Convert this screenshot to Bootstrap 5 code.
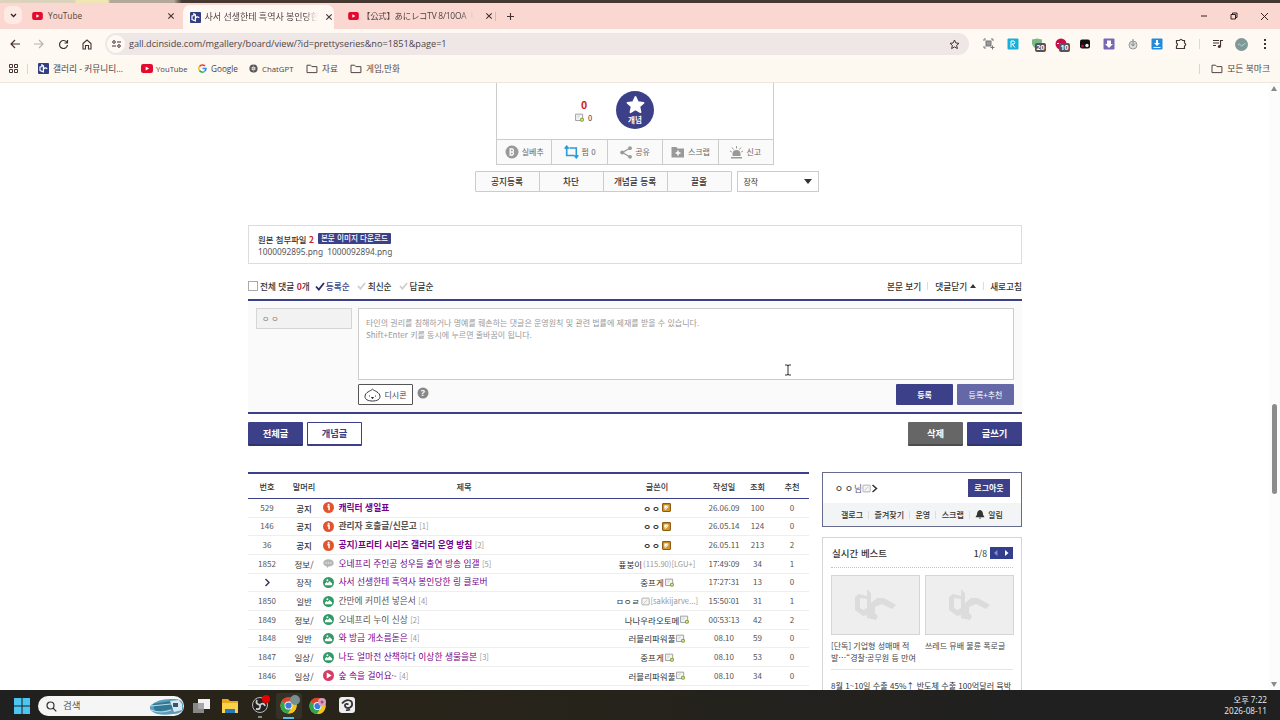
<!DOCTYPE html>
<html lang="ko">
<head>
<meta charset="utf-8">
<title>DCinside gallery</title>
<link rel="stylesheet" href="https://cdn.jsdelivr.net/npm/bootstrap@5.3.0/dist/css/bootstrap.min.css">
<style>
:root{--navy:#3b4089;--ln:#ddd}
body{width:1280px;height:720px;overflow:hidden;font-family:"Noto Sans CJK KR",sans-serif;font-size:8.67px;line-height:12px;color:#333;background:#fff;display:flex;flex-direction:column}
svg{display:block;flex:none}
.ui{font-family:"Open Sans","Noto Sans CJK KR",sans-serif;color:#4d4444}
.desk{height:3px;background:linear-gradient(90deg,#ddd3bc 0 75px,#efe6b4 76px 108px,#b3a89a 110px 174px,#453830 182px)}
.tabs{height:26px;background:#fad7d0;font-size:9px}
.tabs>*{flex:none}
.drop{width:18px;height:18px;border-radius:6px;background:#fdeae4;margin:3px 11px 0 4px}
.acttab{width:151px;height:24px;margin-top:2px;background:#fff8f3;border-radius:7px 7px 0 0}
.clip{overflow:hidden;white-space:nowrap}
.fade-r{-webkit-mask-image:linear-gradient(90deg,#000 88%,transparent)}
.tools{height:30px;background:#fff9f3}
.url{width:864px;height:22px;border-radius:11px;background:#efe7e6;font-size:9.17px}
.url .site{width:18px;height:18px;border-radius:50%;background:#fff9f3;margin-left:2px}
.marks{height:24px;background:#fdf8f0;border-bottom:1px solid #efe6df;font-size:8.2px}
.marks>*{flex:none}
.ext{position:relative;width:12px;height:12px;margin-right:12px}
.ext b{position:absolute;left:4px;top:5px;width:11px;height:9px;border-radius:2px;background:#555;color:#fff;font-size:7px;line-height:9px;text-align:center;font-family:"Open Sans"}
.view{height:607px;overflow:hidden;position:relative}
.page{width:774px;margin-left:248px}
.vote{width:278px;margin-left:248px;border:1px solid #ccc;border-top:0;height:82px}
.vote .top{height:56px}
.vote .bot{height:25px;border-top:1px solid #ccc;background:#fafafa;color:#666;font-size:8px}
.vote .bot>div{flex:1;border-right:1px solid #ccc;gap:3px}
.vote .bot>div:last-child{border:0}
.gae{width:38px;height:38px;border-radius:50%;background:var(--navy);color:#fff;font-size:7.5px;line-height:9px;font-weight:700}
.adm{height:21px;margin:6px 0 0 226.5px}
.adm .grp{width:257px;border:1px solid #ccc;border-radius:1px;background:#fafafa;font-weight:500}
.adm .grp div{flex:1;border-right:1px solid #ccc;text-align:center;line-height:19px}
.adm .grp div:last-child{border:0}
.adm .sel{width:82px;margin-left:5px;border:1px solid #ccc;line-height:19px;padding:0 6px;font-size:8px}
.files{height:39px;margin-top:33px;border:1px solid var(--ln);padding:7px 9px;font-weight:500;font-size:8px;line-height:12px}
.files i{font-style:normal;background:var(--navy);color:#fff;border-radius:1px;padding:0 3px;line-height:10.5px;height:11px;font-size:7.6px}
.files .hd{font-size:8.4px}
.files .nm{font-family:"Noto Sans";font-weight:400;font-size:8.3px;color:#555;line-height:14px}
.chead{height:35px;padding-top:9px;font-weight:500;line-height:26px}
.red{color:#c22;font-weight:700}
.cbox{height:115px;border:solid var(--navy);border-width:2px 0;background:#fafafa}
.nick{width:96px;height:21px;margin:7px 6px 0 8px;border:1px solid #d5d5d5;background:#f2f2f2;color:#777;font-size:8px;line-height:19px;padding-left:5px}
.ta{width:656px;height:72px;margin-top:7px;border:1px solid #ccc;background:#fff;color:#999;font-size:8px;line-height:12px;padding:8px 7px}
.cb{height:21px;border-radius:1px;font-size:8px;line-height:21px;text-align:center;color:#fff;background:var(--navy);font-weight:700;width:57px}
.big{width:55px;height:24px;border-radius:1px;background:var(--navy);color:#fff;font-weight:700;line-height:22px;text-align:center;font-size:9.33px;border-bottom:2px solid #2b3573}
.big.lite{background:#fff;color:var(--navy);border:1px solid var(--navy);border-bottom-width:2px;line-height:21px}
.big.grey{background:#666;border-color:#4c4c4c}
.lst{width:561px;table-layout:fixed;border-top:2px solid var(--navy);border-collapse:separate;border-spacing:0;text-align:center}
.lst th{height:25px;border-bottom:1px solid var(--navy);font-weight:500;padding:0;font-size:8.2px;text-align:center}
.lst td{height:18.67px;padding:0;border-bottom:1px solid #eee;font-size:8px;line-height:12px;white-space:nowrap;color:#555}
.lst td.t{text-align:left;font-size:8.75px}
.lst td.t div{padding-left:1px;gap:4.5px}
.lst td.c,.lst td.w{font-size:8.5px;color:#333}
.nt td.c,.nt td.t,.nt td.w{font-weight:700}
.nt td.c{font-weight:500}
.lst .v{color:#770088}
.lst em{font-style:normal;font-weight:400;color:#999;font-size:7.6px}
.lst .w div{gap:1px}
.jm{letter-spacing:2px}
.side{width:200px;margin-left:13px}
.me{height:55px;border:1px solid #666a8c}
.me .a{height:30px;padding:0 12px}
.me .b{height:23px;background:#f3f4f5;font-size:8px;font-weight:500}
.lo{width:42px;height:18px;background:var(--navy);color:#fff;font-weight:700;font-size:8px;line-height:18px;text-align:center}
.best{height:160px;margin-top:10px;border:1px solid #d5d5d5;padding:0 8px}
.best .h{height:30px;border-bottom:1.5px dotted #c2c2c2}
.best .th{width:89px;height:60px;background:#eee;border:1px solid #d5d5d5}
.best .tx{width:89px;font-size:8px;line-height:12px;margin-top:5px;white-space:nowrap;color:#444}
.bar{height:30px;background:linear-gradient(90deg,#202020 0 30px,#28241a 120px 440px,#24221d 760px,#202020 1000px);color:#eee}
.srch{width:146px;height:20px;border-radius:10px;background:#f5f5f5;color:#555;font-size:9.5px;margin-left:8px}
.sbar{position:absolute;right:0;top:0;width:11px;height:607px;background:#fcfcfc}
.sbar i{position:absolute;left:3px;top:321px;width:5px;height:90px;border-radius:3px;background:#8c8c8c}
.up,.dn{width:0;height:0;border:3.5px solid transparent;border-top:0;border-bottom:5px solid #8a8a8a}
.dn{border-bottom:0;border-top:5px solid #8a8a8a}
.cur{position:absolute;left:784px;top:281px}
.sep{width:1px;height:8px;background:#ddd}
</style>
</head>
<body>
<svg width="0" height="0" style="position:absolute">
<symbol id="yt" viewBox="0 0 12 9"><rect width="12" height="9" rx="2.2" fill="#e3092f"/><path d="M4.7 2.5v4l3.4-2z" fill="#fff"/></symbol>
<symbol id="dc" viewBox="0 0 11 11"><rect width="11" height="11" rx="1" fill="#333d80"/><path d="M3.900 1.800L5.400 2.800V8.800L2 7.500V4L3.900 3.500zM5.400 6.200L7 4.800 9.300 5.600" fill="none" stroke="#fff" stroke-width="1.200"/></symbol>
<symbol id="x" viewBox="0 0 8 8"><path d="M1.3 1.3l5.4 5.4M6.7 1.3L1.3 6.7" stroke="#433" stroke-width="1.1"/></symbol>
<symbol id="fd" viewBox="0 0 12 10"><path d="M1 1.2h3.6l1.3 1.4h5v6H1z" fill="none" stroke="#544" stroke-width="1" stroke-linejoin="round"/></symbol>
<symbol id="inf" viewBox="0 0 10 10"><circle cx="5" cy="5" r="5" fill="#e0552f"/><path d="M4 4.200h1.500v3.300" stroke="#fff" stroke-width="1.400" fill="none"/><circle cx="5.100" cy="2.500" r=".9" fill="#fff"/></symbol>
<symbol id="pic" viewBox="0 0 10 10"><circle cx="5" cy="5" r="5" fill="#339966"/><path d="M1.8 7.4V5.8l1.5-1.3 1.2.9 1.4-1.7 2.4 2.2v1.5z" fill="#fff"/><circle cx="4" cy="2.9" r=".9" fill="#fff"/></symbol>
<symbol id="txt" viewBox="0 0 10 10"><path d="M5 1.2c2.8 0 4.8 1.3 4.8 3.3S7.8 7.7 5 7.7L3.8 9 3 7.4C1.3 7 .2 5.9.2 4.5.2 2.500 2.200 1.200 5 1.200z" fill="#b5b5b5"/><path d="M2.300 4.500h1.200M4.400 4.500h1.200M6.500 4.500h1.200" stroke="#fff" stroke-width="1"/></symbol>
<symbol id="ply" viewBox="0 0 10 10"><circle cx="5" cy="5" r="5" fill="#d43d66"/><path d="M3.400 2.200v5.600L7.900 5z" fill="#fff"/></symbol>
<symbol id="gold" viewBox="0 0 8 8"><rect x=".5" y=".5" width="7" height="7" rx=".8" fill="#d9992b" stroke="#8a5b12"/><path d="M2 2.300h3.800L2.300 5.800z" fill="#fff"/><path d="M3 6l2.800-2.800" stroke="#fff" stroke-width=".8"/></symbol>
<symbol id="gr" viewBox="0 0 8 8"><path d="M.5 1h6.300v5.700H.5z" fill="#f5f5f5" stroke="#999" stroke-width=".8"/><path d="M2 2.200h3L2.400 5z" fill="#ddd"/><circle cx="6.200" cy="6" r="1.800" fill="#7b9e1e"/><path d="M6.200 5v2M5.200 6h2" stroke="#fff" stroke-width=".6"/></symbol>
<symbol id="gy" viewBox="0 0 8 8"><rect x=".8" y="1" width="6.500" height="6" rx=".6" fill="#f5f5f5" stroke="#aaa" stroke-width=".8"/><path d="M2.300 5.700l3.200-3.200" stroke="#bbb" stroke-width=".7"/></symbol>
<symbol id="ck" viewBox="0 0 10 9"><path d="M1 4.500l2.800 3L9 1" fill="none" stroke="currentColor" stroke-width="1.800"/></symbol>
<symbol id="lg" viewBox="0 0 41 32"><path d="M12 0l4 4v10l6-5h7l12 7-4 4-10-5-7 3v6l3 3-2 4-9-2v-3l-4 1-8-6V8l4-3 8 2zM5 9v10l3 2 4-2V10z" fill="#dcdcdc" fill-rule="evenodd"/></symbol>
<symbol id="chr" viewBox="0 0 18 18"><circle cx="9" cy="9" r="8.500" fill="#f6c51b"/><path d="M9 9L1.600 4.700A8.500 8.500 0 0 1 16.400 4.700z" fill="#e2412f"/><path d="M9 9L1.600 4.700A8.500 8.500 0 0 0 8.500 17.500L12.500 11z" fill="#32a352"/><path d="M9 4.700h7.400A8.500 8.500 0 0 1 8.600 17.500l4-6.500z" fill="#f6c51b"/><circle cx="9" cy="9" r="4.200" fill="#fff"/><circle cx="9" cy="9" r="3.300" fill="#3b78e0"/></symbol>
</svg>

<header class="ui">
<div class="desk"></div>
<div class="tabs d-flex">
  <div class="drop d-flex align-items-center justify-content-center"><svg width="7" height="5"><path d="M1 1l2.500 2.500L6 1" fill="none" stroke="#322" stroke-width="1.300"/></svg></div>
  <div class="d-flex align-items-center" style="width:151px;padding-right:2px;margin-left:-1px"><svg width="11" height="8"><use href="#yt"/></svg><span class="flex-grow-1" style="padding-left:5px;font-size:8.300px">YouTube</span><svg style="margin-right:6px" width="8" height="8"><use href="#x"/></svg></div>
  <div class="acttab d-flex align-items-center"><svg width="11" height="11" style="margin-left:6.500px"><use href="#dc"/></svg><span class="clip fade-r" style="width:113px;margin-left:4px">사서 선생한테 흑역사 봉인당한</span><svg style="margin-left:7px" width="8" height="8"><use href="#x"/></svg></div>
  <div class="d-flex align-items-center" style="width:162px;padding-left:14px"><svg width="11" height="8"><use href="#yt"/></svg><span class="clip fade-r" style="width:112px;margin-left:3px;font-size:8.400px;letter-spacing:-.22px;font-family:'Open Sans','Noto Sans CJK JP',sans-serif">【公式】あにレコTV 8/10OA『お</span><svg style="margin-left:11px" width="8" height="8"><use href="#x"/></svg></div>
  <div class="align-self-center" style="width:1px;height:9px;background:#e0b5ae;margin:0 10px 0 -1px"></div>
  <svg class="align-self-center" width="9" height="9"><path d="M4.500 1v7M1 4.500h7" stroke="#433" stroke-width="1.100"/></svg>
  <div class="ms-auto d-flex align-items-center" style="gap:22px;padding-right:11px"><svg width="8" height="8"><path d="M1 4h6" stroke="#322"/></svg><svg width="8" height="8"><path d="M1 2.500h4.500V7H1zM2.500 2.500V1H7v4.500H5.500" fill="none" stroke="#322"/></svg><svg width="9" height="9"><path d="M1 1l7 7M8 1L1 8" stroke="#322"/></svg></div>
</div>
<div class="tools d-flex align-items-center">
  <svg width="12" height="10" style="margin-left:9px"><path d="M11 5H2M6 1L2 5l4 4" fill="none" stroke="#433" stroke-width="1.200"/></svg>
  <svg width="12" height="10" style="margin-left:12px"><path d="M1 5h9M6 1l4 4-4 4" fill="none" stroke="#bbb3ae" stroke-width="1.200"/></svg>
  <svg width="11" height="11" style="margin-left:13px"><path d="M9 3.500A4 4 0 1 0 9.500 6M9.500 1v3h-3" fill="none" stroke="#433" stroke-width="1.200"/></svg>
  <svg width="10" height="11" style="margin-left:13px"><path d="M1 4.500L5 1l4 3.500V10H6.500V6.500h-3V10H1z" fill="none" stroke="#433" stroke-width="1.100"/></svg>
  <div class="url d-flex align-items-center" style="margin-left:13px"><div class="site d-flex align-items-center justify-content-center"><svg width="9" height="8"><path d="M5 2h4M0 6h4" stroke="#433" stroke-width="1.100"/><circle cx="2" cy="2" r="1.300" fill="none" stroke="#433"/><circle cx="7" cy="6" r="1.300" fill="none" stroke="#433"/></svg></div><span style="margin-left:4px">gall.dcinside.com/mgallery/board/view/?id=prettyseries&amp;no=1851&amp;page=1</span><svg class="ms-auto" width="11" height="11" style="margin-right:9px"><path d="M5.500 1l1.400 3 3.100.3-2.400 2.100.8 3.200-2.900-1.700-2.900 1.700.8-3.200L1 4.300 4.100 4z" fill="none" stroke="#433"/></svg></div>
  <div class="d-flex align-items-center" style="margin-left:14px">
   <div class="ext"><svg width="12" height="12"><rect x="3" y="3" width="5" height="5" fill="#999" stroke="#777"/><path d="M1 3V1h2M8 1h2v2M1 8v2h2M9.500 7.500v4M7.500 9.500h4" fill="none" stroke="#777"/></svg></div>
   <div class="ext"><svg width="12" height="12"><rect x=".5" y=".5" width="11" height="11" rx="1" fill="#18b0d8"/><path d="M4 9.500V3h3q1.500 1.500 0 3H5l3 3.500" stroke="#fff" fill="none"/></svg></div>
   <div class="ext"><svg width="12" height="12"><path d="M1 1.500L6 .5l5 1v4q-1 4-5 6-4-2-5-6z" fill="#79b887"/></svg><b>20</b></div>
   <div class="ext"><svg width="12" height="12"><circle cx="6" cy="6" r="5.500" fill="#c80c45"/><path d="M2 5.500h8" stroke="#fff" stroke-dasharray="2 1"/></svg><b>10</b></div>
   <div class="ext"><svg width="12" height="12"><rect x="1" y="1.500" width="10" height="9" rx="2" fill="#111"/><circle cx="3.500" cy="8" r="1.500" fill="#b2152a"/><circle cx="8" cy="7.500" r="1.700" fill="#eee"/></svg></div>
   <div class="ext"><svg width="12" height="12"><rect x=".5" y=".5" width="11" height="11" rx="1" fill="#7767b5"/><path d="M4 2.500h4V6h2L6 10 2 6h2z" fill="#fff"/></svg></div>
   <div class="ext"><svg width="12" height="12"><circle cx="6" cy="7" r="4" fill="#ddd" stroke="#999"/><path d="M6 1v6M4 5.500L6 8l2-2.500" stroke="#888" fill="none"/></svg></div>
   <div class="ext"><svg width="12" height="12"><rect x=".5" y=".5" width="11" height="11" rx="1" fill="#238bdc"/><path d="M5 2h2v3h2L6 8 3 5h2zM2.500 9h7v1h-7z" fill="#fff"/></svg></div>
   <div class="ext"><svg width="12" height="12"><path d="M1.500 2.500h3Q6 0 7.500 2.500h2V5q2.500 1.500 0 3v2.500h-8V8q2-1.500 0-3z" fill="none" stroke="#433" stroke-width="1.200"/></svg></div>
  </div>
  <div style="width:1px;height:10px;background:#ecd2cc;margin:0 12px 0 0"></div>
  <svg width="12" height="10"><path d="M1 1.500h6M1 4h6M1 6.500h3M8.500 7.500V1.500H11" fill="none" stroke="#433" stroke-width="1.200"/><circle cx="7.300" cy="7.500" r="1.500" fill="#433"/></svg>
  <svg width="13" height="13" style="margin-left:11px"><circle cx="6.500" cy="6.500" r="6.500" fill="#7f9998"/><path d="M3 7q1.500-2 2.500 0t2.500 0 2.500-1" stroke="#c5d0cd" fill="none"/></svg>
  <svg width="3" height="10" style="margin-left:16px"><path d="M0 0h2v2H0zM0 4h2v2H0zM0 8h2v2H0z" fill="#433"/></svg>
</div>
<div class="marks d-flex align-items-center" style="padding-bottom:4px">
  <svg width="9" height="9" style="margin-left:9px"><path d="M.5.500h3v3h-3zM5.500.500h3v3h-3zM.5 5.500h3v3h-3zM5.500 5.500h3v3h-3z" fill="none" stroke="#433"/></svg>
  <div style="width:1px;height:10px;background:#f1ccc6;margin:0 10px 0 9px"></div>
  <svg width="11" height="11"><use href="#dc"/></svg><span style="width:88px;margin-left:4px;font-size:8.700px">갤러리 - 커뮤니티...</span>
  <svg width="12" height="9"><use href="#yt"/></svg><span style="width:41px;margin-left:3px;font-size:7.700px">YouTube</span>
  <svg width="9" height="9" viewBox="0 0 9 9" fill="none" stroke-width="1.500" style="margin-left:1px"><path d="M7 2A3.500 3.500 0 0 0 1.500 2.500" stroke="#e43"/><path d="M1.500 2.500a3.500 3.500 0 0 0 0 4" stroke="#fb1"/><path d="M1.500 6.500A3.500 3.500 0 0 0 6.500 7.500" stroke="#3a5"/><path d="M6.500 7.300Q8 6.300 8 4.500H4.500" stroke="#38e"/></svg><span style="width:38px;margin-left:4px">Google</span>
  <svg width="9" height="9"><circle cx="4.500" cy="4.500" r="3" fill="none" stroke="#555" stroke-width="2.200"/><path d="M4.500 1v7M1.500 3l6 3M7.500 3l-6 3" stroke="#999" stroke-width=".6"/></svg><span style="width:43px;margin-left:4px;font-size:7.800px">ChatGPT</span>
  <svg width="12" height="10" style="margin-left:1px"><use href="#fd"/></svg><span style="width:28px;margin-left:4px;font-size:8.600px">자료</span>
  <svg width="12" height="10"><use href="#fd"/></svg><span style="margin-left:4px;font-size:8.600px">게임,만화</span>
  <div class="ms-auto" style="width:1px;height:10px;background:#f1ccc6;margin-right:11px"></div>
  <svg width="12" height="10"><use href="#fd"/></svg><span style="margin:0 10px 0 4px;font-size:8.800px">모든 북마크</span>
</div>
</header>

<main class="view">
<div class="page">
 <div class="vote">
  <div class="top d-flex">
   <div class="text-center" style="margin-left:78px;width:18px;margin-top:16px"><div class="red" style="font-size:10.500px">0</div><div class="d-flex" style="font-size:7.500px;gap:4px;margin-top:1px"><svg width="9" height="9" style="margin-top:1px"><use href="#gr"/></svg>0</div></div>
   <div class="gae d-flex flex-column align-items-center" style="margin:8px 0 0 23px;padding-top:5px"><svg width="19" height="18" viewBox="0 0 19 18"><path d="M9.500 1l2.400 5.200 5.600.6-4.200 3.700 1.200 5.700-5-2.900-5 2.900 1.200-5.700L1.500 6.800l5.600-.6z" fill="#fff" stroke="#fff" stroke-width="1.800" stroke-linejoin="round"/></svg><span style="margin-top:1px">개념</span></div>
  </div>
  <div class="bot d-flex">
   <div class="d-flex align-items-center justify-content-center"><svg width="14" height="14"><circle cx="7" cy="7" r="6.500" fill="#999"/><path d="M5.200 4h2.300q2 1.500 0 3 2 1.500 0 3H5.200zM5.200 7h2.500" fill="none" stroke="#fff" stroke-width="1.300"/></svg>실베추</div>
   <div class="d-flex align-items-center justify-content-center"><svg width="15" height="14" viewBox="0 0 15 14"><path d="M2.700 1.500V10.500H10M5.500 3H12.300V12.500M.7 3.700L2.700 1.200 4.700 3.700M10.300 10.300L12.300 12.800 14.300 10.300" fill="none" stroke="#2a9bd8" stroke-width="1.600"/></svg>펌 0</div>
   <div class="d-flex align-items-center justify-content-center"><svg width="12" height="13"><path d="M10 2L2.500 6.500 10 11" fill="none" stroke="#999" stroke-width="1.300"/><circle cx="10" cy="2.200" r="1.900" fill="#999"/><circle cx="2.200" cy="6.500" r="2" fill="#999"/><circle cx="10" cy="10.800" r="1.900" fill="#999"/></svg>공유</div>
   <div class="d-flex align-items-center justify-content-center"><svg width="14" height="12"><path d="M.5 1h5l1 1.500H13V11.500H.5z" fill="#999"/><path d="M7 4.500v5M4.500 7h5" stroke="#fff" stroke-width="1.500"/></svg><span>스크랩</span></div>
   <div class="d-flex align-items-center justify-content-center"><svg width="13" height="13"><path d="M2.500 10V8a4 4 0 0 1 8 0v2zM1 11h11v1.500H1z" fill="#999"/><path d="M6.500 0v2.500M2 1.500l1.500 2M11 1.500l-1.500 2M0 5l1.800 1M13 5l-1.800 1" stroke="#999"/></svg><span>신고</span></div>
  </div>
 </div>
 <div class="adm d-flex">
  <div class="grp d-flex"><div>공지등록</div><div>차단</div><div>개념글 등록</div><div>끌올</div></div>
  <div class="sel d-flex align-items-center justify-content-between"><span>장작</span><div class="dn" style="border-width:5px 4px 0;border-top-color:#333"></div></div>
 </div>
 <div class="files"><div class="d-flex hd"><span>원본 첨부파일 <span class="red">2</span></span><i class="ms-1">본문 이미지 다운로드</i></div><div class="nm">1000092895.png&nbsp; 1000092894.png</div></div>
 <div class="chead d-flex align-items-center">
  <div style="width:10px;height:10px;border:1px solid #aaa;margin:0 2px 0 0"></div>전체 댓글&nbsp;<span class="red">0</span>개
  <svg width="10" height="9" style="margin:0 1px 0 5px;color:#252b60"><use href="#ck"/></svg><span style="color:var(--navy)">등록순</span>
  <svg width="9" height="8" style="margin:0 2px 0 7px;color:#ccc"><use href="#ck"/></svg>최신순
  <svg width="9" height="8" style="margin:0 2px 0 7px;color:#ccc"><use href="#ck"/></svg>답글순
  <span class="ms-auto">본문 보기</span><div class="sep" style="margin:0 7px 0 6px"></div>댓글닫기<div class="up" style="margin:0 7px 0 3px;border-bottom-color:#333;border-bottom-width:4px"></div><div class="sep" style="margin-right:6px"></div>새로고침
 </div>
 <div class="cbox">
  <div class="d-flex"><div class="nick jm">ㅇㅇ</div><div class="ta">타인의 권리를 침해하거나 명예를 훼손하는 댓글은 운영원칙 및 관련 법률에 제재를 받을 수 있습니다.<br>Shift+Enter 키를 동시에 누르면 줄바꿈이 됩니다.</div></div>
  <div class="d-flex" style="margin:4px 8px 0 110px">
   <div class="cb d-flex align-items-center justify-content-center" style="width:55px;background:#fff;border:1px solid #555;color:#444;font-weight:400;gap:3px"><svg width="17" height="14" viewBox="0 0 17 14"><path d="M8.500 1.200C10 3 16 4 16 8.500c0 3-3 4.500-7.500 4.500S1 11.500 1 8.500C1 4 7 3 8.500 1.200z" fill="#fff" stroke="#333"/><path d="M5 8h1M11 8h1M7.500 9.500h2l-1 1.200z" stroke="#333"/></svg>디시콘</div>
   <svg width="12" height="12" style="margin:3px 0 0 4px"><circle cx="6" cy="6" r="5.500" fill="#888"/><text x="6" y="9.300" font-size="9" font-weight="700" text-anchor="middle" fill="#fff" font-family="Open Sans">?</text></svg>
   <div class="cb ms-auto">등록</div><div class="cb ms-1" style="background:#6468a6;font-weight:400">등록+추천</div>
  </div>
 </div>
 <div class="d-flex gap-1" style="margin-top:8px"><div class="big">전체글</div><div class="big lite">개념글</div><div class="big grey ms-auto">삭제</div><div class="big">글쓰기</div></div>
 <div class="d-flex align-items-start" style="margin-top:26px">
  <table class="lst" id="lst">
   <colgroup><col style="width:38px"><col style="width:36px"><col style="width:284px"><col style="width:102px"><col style="width:32px"><col style="width:35px"><col style="width:34px"></colgroup>
   <thead><tr><th>번호</th><th>말머리</th><th>제목</th><th>글쓴이</th><th>작성일</th><th>조회</th><th>추천</th></tr></thead>
   <tbody></tbody>
  </table>
  <aside class="side">
   <div class="me">
    <div class="a d-flex align-items-center"><span class="jm" style="font-weight:500">ㅇㅇ</span><span style="color:#556;margin-left:-1px">님</span><svg width="9" height="9"><use href="#gy"/></svg><svg width="7" height="9"><path d="M1.500 1L5.500 4.500 1.500 8" fill="none" stroke="#333" stroke-width="1.500"/></svg><div class="lo ms-auto" style="margin-right:-1px">로그아웃</div></div>
    <div class="b d-flex align-items-center" style="padding:0 18px;justify-content:space-between"><span>갤로그</span><div class="sep"></div><span>즐겨찾기</span><div class="sep"></div><span>운영</span><div class="sep"></div><span>스크랩</span><div class="sep"></div><span class="d-flex align-items-center" style="gap:3px"><svg width="10" height="9"><path d="M5 0Q8 .5 8 4.500L9.500 7.300H.5L2 4.500Q2 .5 5 0zM3.800 7.800h2.400L5 9z" fill="#333"/></svg>알림</span></div>
   </div>
   <div class="best">
    <div class="h d-flex align-items-center"><b style="font-size:9.500px;font-weight:500;padding-left:1px">실시간 베스트</b><span class="ms-auto"><span style="font-weight:500">1</span>/8</span><svg width="23" height="12" style="margin-left:3px"><rect width="23" height="12" fill="#333f8c"/><path d="M7.500 3L4 6l3.500 3z" fill="#8290d2"/><path d="M15 3l3.500 3L15 9z" fill="#fff"/></svg></div>
    <div class="d-flex" style="gap:5px;margin-top:7px"><div><div class="th d-flex align-items-center justify-content-center"><svg width="41" height="32"><use href="#lg"/></svg></div><div class="tx">[단독] 기업형 성매매 적<br>발…“경찰·공무원 등 만여</div></div><div><div class="th d-flex align-items-center justify-content-center"><svg width="41" height="32"><use href="#lg"/></svg></div><div class="tx">쓰레드 뮤배 불륜 폭로글</div></div></div>
    <div style="border-top:1px solid #e5e5e5;margin-top:5px;padding-top:10px;font-size:8.080px;white-space:nowrap">8월 1~10일 수출 45%↑ 반도체 수출 100억달러 육박</div>
   </div>
  </aside>
 </div>
</div>
<div class="sbar"><div class="up" style="margin:3px 0 0 2px"></div><i></i><div class="dn" style="position:absolute;left:2px;bottom:3px"></div></div>
<svg class="cur" width="8" height="12"><path d="M1 1h2.500L4 2l.5-1H7M1 11h2.500L4 10l.5 1H7M4 1v10" fill="none" stroke="#333"/></svg>
</main>

<footer class="bar ui d-flex align-items-center">
 <svg width="16" height="16" style="margin:2px 0 0 14px"><path d="M0 0h7.500v7.500H0zM8.500 0H16v7.500H8.500zM0 8.500h7.500V16H0zM8.500 8.500H16V16H8.500z" fill="#4cc5f2"/></svg>
 <div class="srch d-flex align-items-center" style="margin-top:2px"><svg width="11" height="11" style="margin:0 6px 0 8px"><circle cx="4.500" cy="4.500" r="3.500" fill="none" stroke="#333" stroke-width="1.200"/><path d="M7 7l3.300 3.300" stroke="#333" stroke-width="1.200"/></svg><span>검색</span>
 <svg class="ms-auto" width="34" height="17" viewBox="0 0 34 17"><path d="M1 7Q9 0 24 1q8 0 9 5v6q-3 4-10 4-14 2-20-2-5-3-2-7z" fill="#5b9dbb"/><path d="M3 6l18-3 2 8-18 3z" fill="#327894"/><path d="M1 8l20-2M1 12q10 4 20 0" stroke="#b5dbe7" stroke-width="1.200" fill="none"/><path d="M20 3l9-1 3 4v6l-8 2z" fill="#d9e9ee"/><path d="M23 5h5v4h-5z" fill="#35586d"/></svg></div>
 <svg width="18" height="16" style="margin:1px 0 0 8px"><rect x="6" y="1" width="12" height="10" fill="#f2f2f2"/><rect x="1" y="5" width="11" height="10" fill="#999" opacity=".85"/></svg>
 <svg width="18" height="16" style="margin:1px 0 0 11px"><path d="M1 1h6l2 2h8v12H1z" fill="#e6a91b"/><path d="M1 5h16v10H1z" fill="#fbd04d"/><path d="M4 11h10v4H4z" fill="#257cbd"/></svg>
 <svg width="20" height="26" style="margin:2px 0 0 12px"><circle cx="9" cy="12" r="7.500" fill="#222" stroke="#bbb"/><path d="M9 12q-5-1-3-5M9 12q4-3 5 1M9 12q1 5-4 4" fill="none" stroke="#ccc" stroke-width="1.800"/><circle cx="15" cy="6" r="4" fill="#e60000"/><path d="M7 24h4" stroke="#aaa" stroke-width="1.500"/></svg>
 <div style="width:26px;height:26px;margin:1px 0 0 5px;background:#343127;border-radius:3px"><svg width="26" height="26"><use href="#chr" x="4" y="4" width="17" height="17"/><circle cx="19" cy="7" r="5" fill="#789090"/><path d="M7 25h11" stroke="#57bde5" stroke-width="2"/></svg></div>
 <svg width="18" height="18" style="margin:1px 0 0 7px"><use href="#chr" width="17" height="18"/><circle cx="13" cy="5" r="4" fill="#dca0bd"/><circle cx="13" cy="5" r="1.500" fill="#9c4d78"/></svg>
 <svg width="17" height="17" style="margin:1px 0 0 12px"><rect width="16" height="16" rx="3" fill="#eee"/><path d="M3 6.500Q8 1 12.500 4.500 14.500 9 10 11 5.500 11 6 8q1-2 3.500-.5M7 13q2 .5 4-.5" fill="none" stroke="#333" stroke-width="1.800"/></svg>
 <div class="ms-auto text-end" style="margin-right:13px;font-size:8.200px;line-height:11px">오후 7:22<br>2026-08-11</div>
</footer>

<script>
// board rows: number, category, icon, title, replies, writer, writer icon, writer suffix, date, views, likes, visited
const rows=[
['529','공지','inf','캐릭터 생일표','','ㅇㅇ','gold','','26.06.09',100,0,1],
['146','공지','inf','관리자 호출글/신문고','1','ㅇㅇ','gold','','26.05.14',124,0,0],
['36','공지','inf','공지)프리티 시리즈 갤러리 운영 방침','2','ㅇㅇ','gold','','26.05.11',213,2,1],
['1852','정보/','txt','오네프리 주인공 성우들 출연 방송 입갤','5','픂붕이','','(115.90)[LGU+]','17:49:09',34,1,1],
['','장작','pic','사서 선생한테 흑역사 봉인당한 링 클로버','','중프게','gr','','17:27:31',13,0,1],
['1850','일반','pic','간만에 커미션 넣은서','4','ㅁㅇㄹ','gy','[sakkijarve...]','15:50:01',31,1,0],
['1849','정보/','pic','오네프리 누이 신상','2','나나우라오토메','gr','','00:53:13',42,2,0],
['1848','일반','pic','와 방금 개소름돋은','4','러블리파워풀','gr','','08.10',59,0,1],
['1847','일상/','pic','나도 얼마전 산책하다 이상한 생물을본','3','중프게','gr','','08.10',53,0,1],
['1846','일상/','ply','숲 속을 걸어요~','4','러블리파워풀','gr','','08.10',34,0,1]];
document.querySelector('#lst tbody').innerHTML=rows.map((r,i)=>`<tr class="${i<3?'nt':''}"><td>${r[0]||'<svg class="mx-auto" width="7" height="9"><path d="M1.500 1L5 4.500 1.500 8" fill="none" stroke="#335" stroke-width="1.400"/></svg>'}</td><td class="c">${r[1]}</td><td class="t"><div class="d-flex align-items-center"><svg width="11" height="11"><use href="#${r[2]}"/></svg><span class="${r[11]?'v':''}">${r[3]}${r[4]?` <em>[${r[4]}]</em>`:''}</span></div></td><td class="w"><div class="d-flex align-items-center justify-content-center"><span${i<3?' style="letter-spacing:1px"':''}>${r[5]}</span>${r[6]?`<svg width="9" height="9"><use href="#${r[6]}"/></svg>`:''}${r[7]?`<em>${r[7]}</em>`:''}</div></td><td>${r[8]}</td><td>${r[9]}</td><td>${r[10]}</td></tr>`).join('');
</script>
<script src="https://cdn.jsdelivr.net/npm/bootstrap@5.3.0/dist/js/bootstrap.bundle.min.js"></script>
</body>
</html>
